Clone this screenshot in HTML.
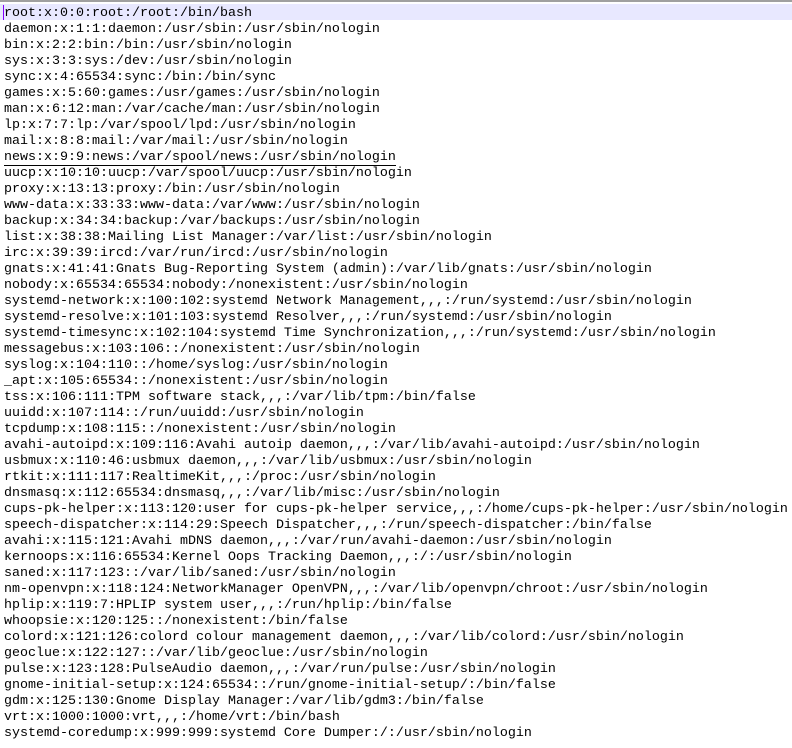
<!DOCTYPE html>
<html><head><style>
html,body{margin:0;padding:0;background:#fff;width:792px;height:748px;overflow:hidden}
.top{position:absolute;left:0;top:0;width:792px;height:2px;background:#a0a0a0}
.hl{position:absolute;left:0;top:4px;width:792px;height:16px;background:#e8e8ff}
.caret{position:absolute;left:3px;top:5px;width:1px;height:15px;background:#8000ff}
pre{position:absolute;left:4px;top:6px;margin:0;font-family:"Liberation Mono",monospace;font-size:13.33px;line-height:16px;color:#000}
u{text-decoration:none;border-bottom:1px solid #000}
</style></head><body>
<div class="top"></div><div class="hl"></div><div class="caret"></div>
<pre>root:x:0:0:root:/root:/bin/bash
daemon:x:1:1:daemon:/usr/sbin:/usr/sbin/nologin
bin:x:2:2:bin:/bin:/usr/sbin/nologin
sys:x:3:3:sys:/dev:/usr/sbin/nologin
sync:x:4:65534:sync:/bin:/bin/sync
games:x:5:60:games:/usr/games:/usr/sbin/nologin
man:x:6:12:man:/var/cache/man:/usr/sbin/nologin
lp:x:7:7:lp:/var/spool/lpd:/usr/sbin/nologin
mail:x:8:8:mail:/var/mail:/usr/sbin/nologin
<u>news:x:9:9:news:/var/spool/news:/usr/sbin/nologin</u>
uucp:x:10:10:uucp:/var/spool/uucp:/usr/sbin/nologin
proxy:x:13:13:proxy:/bin:/usr/sbin/nologin
www-data:x:33:33:www-data:/var/www:/usr/sbin/nologin
backup:x:34:34:backup:/var/backups:/usr/sbin/nologin
list:x:38:38:Mailing List Manager:/var/list:/usr/sbin/nologin
irc:x:39:39:ircd:/var/run/ircd:/usr/sbin/nologin
gnats:x:41:41:Gnats Bug-Reporting System (admin):/var/lib/gnats:/usr/sbin/nologin
nobody:x:65534:65534:nobody:/nonexistent:/usr/sbin/nologin
systemd-network:x:100:102:systemd Network Management,,,:/run/systemd:/usr/sbin/nologin
systemd-resolve:x:101:103:systemd Resolver,,,:/run/systemd:/usr/sbin/nologin
systemd-timesync:x:102:104:systemd Time Synchronization,,,:/run/systemd:/usr/sbin/nologin
messagebus:x:103:106::/nonexistent:/usr/sbin/nologin
syslog:x:104:110::/home/syslog:/usr/sbin/nologin
_apt:x:105:65534::/nonexistent:/usr/sbin/nologin
tss:x:106:111:TPM software stack,,,:/var/lib/tpm:/bin/false
uuidd:x:107:114::/run/uuidd:/usr/sbin/nologin
tcpdump:x:108:115::/nonexistent:/usr/sbin/nologin
avahi-autoipd:x:109:116:Avahi autoip daemon,,,:/var/lib/avahi-autoipd:/usr/sbin/nologin
usbmux:x:110:46:usbmux daemon,,,:/var/lib/usbmux:/usr/sbin/nologin
rtkit:x:111:117:RealtimeKit,,,:/proc:/usr/sbin/nologin
dnsmasq:x:112:65534:dnsmasq,,,:/var/lib/misc:/usr/sbin/nologin
cups-pk-helper:x:113:120:user for cups-pk-helper service,,,:/home/cups-pk-helper:/usr/sbin/nologin
speech-dispatcher:x:114:29:Speech Dispatcher,,,:/run/speech-dispatcher:/bin/false
avahi:x:115:121:Avahi mDNS daemon,,,:/var/run/avahi-daemon:/usr/sbin/nologin
kernoops:x:116:65534:Kernel Oops Tracking Daemon,,,:/:/usr/sbin/nologin
saned:x:117:123::/var/lib/saned:/usr/sbin/nologin
nm-openvpn:x:118:124:NetworkManager OpenVPN,,,:/var/lib/openvpn/chroot:/usr/sbin/nologin
hplip:x:119:7:HPLIP system user,,,:/run/hplip:/bin/false
whoopsie:x:120:125::/nonexistent:/bin/false
colord:x:121:126:colord colour management daemon,,,:/var/lib/colord:/usr/sbin/nologin
geoclue:x:122:127::/var/lib/geoclue:/usr/sbin/nologin
pulse:x:123:128:PulseAudio daemon,,,:/var/run/pulse:/usr/sbin/nologin
gnome-initial-setup:x:124:65534::/run/gnome-initial-setup/:/bin/false
gdm:x:125:130:Gnome Display Manager:/var/lib/gdm3:/bin/false
vrt:x:1000:1000:vrt,,,:/home/vrt:/bin/bash
systemd-coredump:x:999:999:systemd Core Dumper:/:/usr/sbin/nologin</pre>
</body></html>
